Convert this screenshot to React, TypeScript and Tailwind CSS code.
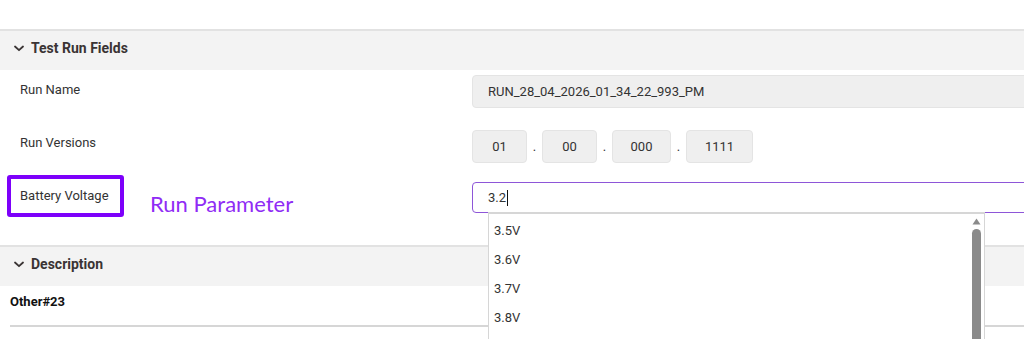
import React from "react";

const Chevron = () => (
  <svg width="10" height="7" viewBox="0 0 10 7" className="shrink-0">
    <path d="M1 1.5 L5 5.2 L9 1.5" fill="none" stroke="#3a3434" strokeWidth="1.8" strokeLinecap="round" strokeLinejoin="round" />
  </svg>
);

const SectionHeader = ({ title }: { title: string }) => (
  <div className="h-[41px] border-t-2 border-[#e2e2e2] bg-[#f3f3f3] flex items-center pl-[14px] gap-[7px] pb-[4px]">
    <Chevron />
    <span className="text-[14px] font-bold text-[#3a3434]">{title}</span>
  </div>
);

const VersionBox = ({ v, w }: { v: string; w: string }) => (
  <div className={`${w} shrink-0 h-[33px] rounded-[4px] bg-[#efefef] border border-[#e4e4e4] flex items-center justify-center text-[13px] text-[#333]`}>
    {v}
  </div>
);

const Dot = () => <span className="w-[15px] shrink-0 text-center text-[13px] text-[#333] leading-none">.</span>;

export default function App() {
  return (
    <div
      className="w-[1024px] h-[339px] overflow-hidden bg-white relative"
      style={{ fontFamily: "Roboto, 'Liberation Sans', sans-serif" }}
    >
      <div className="h-[29px]" />
      <SectionHeader title="Test Run Fields" />

      {/* Run Name */}
      <div className="flex items-center pt-[5px]">
        <div className="w-[472px] shrink-0 pl-[20px] text-[13px] text-[#333] -mt-[4px]">Run Name</div>
        <div className="w-[600px] shrink-0 h-[33px] rounded-[4px] bg-[#efefef] border border-[#e4e4e4] flex items-center pl-[15px] text-[13px] text-[#333]">
          RUN_28_04_2026_01_34_22_993_PM
        </div>
      </div>

      {/* Run Versions */}
      <div className="flex items-center mt-[22px]">
        <div className="w-[472px] shrink-0 pl-[20px] text-[13px] text-[#333] -mt-[8px]">Run Versions</div>
        <div className="flex items-center">
          <VersionBox v="01" w="w-[55px]" />
          <Dot />
          <VersionBox v="00" w="w-[55px]" />
          <Dot />
          <VersionBox v="000" w="w-[59px]" />
          <Dot />
          <VersionBox v="1111" w="w-[67px]" />
        </div>
      </div>

      {/* Battery Voltage */}
      <div className="flex items-center mt-[12px] h-[42px]">
        <div className="w-[472px] shrink-0 flex items-center pl-[7px]">
          <div className="w-[117px] shrink-0 h-[42px] border-[4px] border-[#7d00fa] rounded-[3px] flex items-center pl-[9px] text-[13px] text-[#333]">
            Battery Voltage
          </div>
          <span
            className="ml-[26px] mt-[16px] text-[22px] text-[#8f2cf5] leading-none whitespace-nowrap"
            style={{ fontFamily: "Lato, 'Open Sans', sans-serif" }}
          >
            Run Parameter
          </span>
        </div>
        <div className="relative mt-[3px] shrink-0">
          <div className="w-[600px] h-[31px] rounded-[4px] bg-white border border-[#8e56d8] flex items-center pl-[15px] text-[13px] text-[#333]">
            3.2<span className="inline-block w-[1px] h-[16px] bg-[#111] ml-[1px]" />
          </div>
          <div className="absolute left-[16px] top-[30px] w-[497px] h-[140px] bg-white border-t-2 border-l border-r border-[#d6d6d6] z-10 flex">
            <div className="flex-1 flex flex-col pt-[2px] pl-[5px] text-[13px] text-[#333]">
              <div className="h-[29px] flex items-center">3.5V</div>
              <div className="h-[29px] flex items-center">3.6V</div>
              <div className="h-[29px] flex items-center">3.7V</div>
              <div className="h-[29px] flex items-center">3.8V</div>
            </div>
            <div className="w-[14px] flex flex-col items-center pt-[4px] mr-[1px]">
              <svg width="9" height="7" viewBox="0 0 9 7">
                <path d="M4.5 0.5 L8.5 6.5 L0.5 6.5 Z" fill="#8a8a8a" />
              </svg>
              <div className="mt-[4px] w-[9px] flex-1 bg-[#8a8a8a] rounded-t-[5px]" />
            </div>
          </div>
        </div>
      </div>

      <div className="h-[28px]" />
      <SectionHeader title="Description" />
      <div className="pl-[10px] pt-[6px] text-[13px] font-bold text-[#111] h-[39px]">Other#23</div>
      <div className="ml-[10px] border-t-2 border-[#d6d6d6]" />
    </div>
  );
}
